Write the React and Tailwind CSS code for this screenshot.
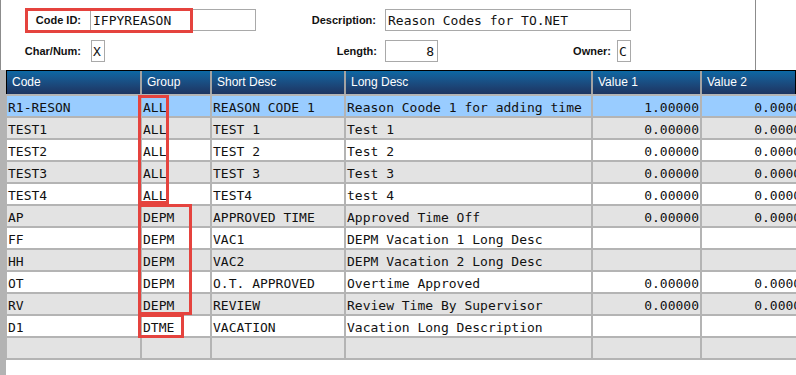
import React from 'react';

const COLS = 'grid grid-cols-[133px_68px_132px_245px_107px_108px] gap-x-[2px]';

const headers = ['Code', 'Group', 'Short Desc', 'Long Desc', 'Value 1', 'Value 2'];

const rows = [
  ['R1-RESON', 'ALL', 'REASON CODE 1', 'Reason Coode 1 for adding time', '1.00000', '0.00000'],
  ['TEST1', 'ALL', 'TEST 1', 'Test 1', '0.00000', '0.00000'],
  ['TEST2', 'ALL', 'TEST 2', 'Test 2', '0.00000', '0.00000'],
  ['TEST3', 'ALL', 'TEST 3', 'Test 3', '0.00000', '0.00000'],
  ['TEST4', 'ALL', 'TEST4', 'test 4', '0.00000', '0.00000'],
  ['AP', 'DEPM', 'APPROVED TIME', 'Approved Time Off', '0.00000', '0.00000'],
  ['FF', 'DEPM', 'VAC1', 'DEPM Vacation 1 Long Desc', '', ''],
  ['HH', 'DEPM', 'VAC2', 'DEPM Vacation 2 Long Desc', '', ''],
  ['OT', 'DEPM', 'O.T. APPROVED', 'Overtime Approved', '0.00000', '0.00000'],
  ['RV', 'DEPM', 'REVIEW', 'Review Time By Supervisor', '0.00000', '0.00000'],
  ['D1', 'DTME', 'VACATION', 'Vacation Long Description', '', ''],
  ['', '', '', '', '', ''],
];

function Label({ children, className = '' }) {
  return (
    <div className={`text-right text-[11px] font-bold text-[#111] ${className}`}>{children}</div>
  );
}

function Field({ value, className = '', right = false }) {
  return (
    <div
      className={`h-[22px] border border-[#a9a9a9] bg-white font-['DejaVu_Sans_Mono',monospace] text-[13px] leading-[21px] text-[#111] whitespace-nowrap overflow-hidden ${
        right ? 'text-right pr-[2px]' : 'pl-[2px]'
      } ${className}`}
    >
      {value}
    </div>
  );
}

export default function App() {
  return (
    <div className="relative w-[796px] h-[375px] overflow-hidden bg-white font-['Liberation_Sans',Arial,sans-serif]">
      {/* Header form */}
      <div className="w-[756px] h-[70px] border-l border-r border-[#8c8c8c] pt-[9px]">
        <div className="flex items-center h-[22px]">
          <Label className="w-[80px]">Code ID:</Label>
          <Field value="IFPYREASON" className="ml-[9px] w-[166px]" />
          <Label className="w-[120px]">Description:</Label>
          <Field value="Reason Codes for TO.NET" className="ml-[9px] w-[246px]" />
        </div>
        <div className="flex items-center h-[22px] mt-[9px]">
          <Label className="w-[80px]">Char/Num:</Label>
          <Field value="X" className="ml-[10px] w-[14px] !pl-[1px]" />
          <Label className="w-[272px]">Length:</Label>
          <Field value="8" right className="ml-[8px] w-[53px] !pr-[3px]" />
          <Label className="w-[173px]">Owner:</Label>
          <Field value="C" className="ml-[6px] w-[14px] !pl-[1px]" />
        </div>
      </div>

      {/* Grid area */}
      <div className="flex h-[305px]">
        <div className="w-[6px] bg-[#b3b3b3]" />
        <div className="flex-1 min-w-0">
          <div className="flex flex-col gap-y-[2px] pb-[2px] bg-[#b4b4b4]">
            <div className={`${COLS} h-[24px] bg-[#a3a3a3] border-t border-l border-r border-black overflow-hidden`}>
              {headers.map((h) => (
                <div
                  key={h}
                  className="bg-gradient-to-b from-[#0a68a4] to-[#1c3461] text-white text-[12px] leading-[23px] pl-[5px] whitespace-nowrap"
                >
                  {h}
                </div>
              ))}
            </div>
            {rows.map((r, i) => {
              const bg = i === 0 ? 'bg-[#99ccff]' : i % 2 === 1 ? 'bg-[#e3e3e3]' : 'bg-white';
              return (
                <div key={i} className={`${COLS} h-[20px] pl-[1px] overflow-hidden`}>
                  {r.map((c, j) => (
                    <div
                      key={j}
                      className={`${bg} font-['DejaVu_Sans_Mono',monospace] text-[13px] leading-[23px] text-[#111] whitespace-nowrap overflow-hidden ${
                        j >= 4 ? 'text-right pr-[1px]' : 'pl-[1px]'
                      }`}
                    >
                      {c}
                    </div>
                  ))}
                </div>
              );
            })}
          </div>
        </div>
      </div>

      {/* Annotation boxes */}
      <div className="absolute left-[25px] top-[8px] w-[168px] h-[25px] border-[3px] border-[#e5433e]" />
      <div className="absolute left-[138px] top-[95px] w-[31px] h-[109px] border-[3px] border-[#e5433e]" />
      <div className="absolute left-[138px] top-[204px] w-[54px] h-[111px] border-[3px] border-[#e5433e]" />
      <div className="absolute left-[138px] top-[314px] w-[46px] h-[24px] border-[3px] border-[#e5433e]" />
    </div>
  );
}
